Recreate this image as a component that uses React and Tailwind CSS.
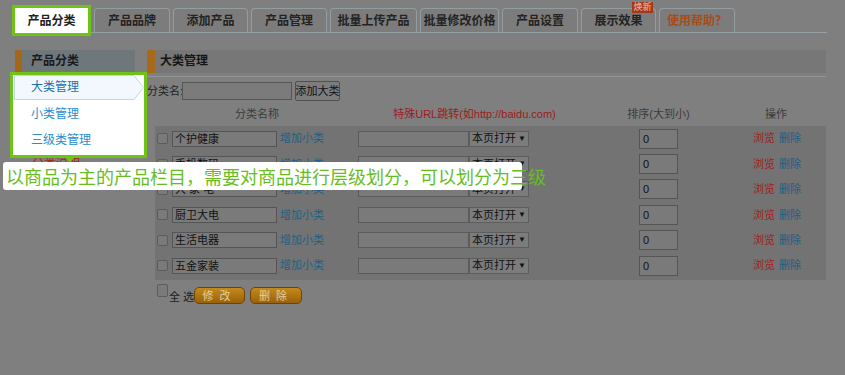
import React from 'react';

const TABS = [
  { label: '产品品牌', w: 'w-[76px]' },
  { label: '添加产品', w: 'w-[75px]' },
  { label: '产品管理', w: 'w-[76px]' },
  { label: '批量上传产品', w: 'w-[87px]' },
  { label: '批量修改价格', w: 'w-[79px]' },
  { label: '产品设置', w: 'w-[76px]' },
  { label: '展示效果', w: 'w-[75px]', badge: '焕新' },
  { label: '使用帮助？', w: 'w-[76px]', help: true },
];

const ROWS = ['个护健康', '手机数码', '大 家 电', '厨卫大电', '生活电器', '五金家装'];

const Checkbox = ({ tall }) => (
  <span className={`block shrink-0 w-[11px] ${tall ? 'h-[13px]' : 'h-[11px]'} rounded-[2px] border border-[#5c5c5c] bg-[#7a7a7a]`} />
);

export default function App() {
  return (
    <div className="relative w-[845px] h-[375px] overflow-hidden bg-[#7f7f7f] text-[#1c1c1c] font-['Liberation_Sans','Noto_Sans_CJK_SC',sans-serif]">
      {/* tabs */}
      <div className="flex items-end gap-[3px] ml-[12px] mr-[18px] pt-[5px] border-b border-[#959fa4]">
        <div className="relative z-10 shrink-0 w-[79px] h-[31px] -mb-[4px] border-[3px] border-[#6fc317] bg-white flex items-center justify-center text-[12px] font-bold text-[#222]">
          产品分类
        </div>
        {TABS.map((t) => (
          <div
            key={t.label}
            className={`relative shrink-0 ${t.w} h-[24px] rounded-t-[4px] border border-b-0 border-[#939ca1] bg-[#7c7c7c] flex items-center justify-center text-[12px] font-bold whitespace-nowrap ${t.help ? 'text-[#a94b17]' : 'text-[#232323]'}`}
          >
            {t.label}
            {t.badge && (
              <span className="absolute left-[50px] -top-[7px] w-[21px] h-[11px] bg-[#a3391b] text-[#e8c8b8] text-[9px] leading-[11px] text-center font-normal">
                {t.badge}
              </span>
            )}
          </div>
        ))}
      </div>

      <div className="flex mt-[17px]">
        {/* sidebar */}
        <div className="shrink-0 ml-[15px] w-[120px]">
          <div className="h-[22px] border-l-[7px] border-[#a4661a] bg-[#6e777a] pl-[9px] text-[12px] font-bold leading-[22px] text-[#1a1a1a]">
            产品分类
          </div>
          <div className="relative z-10 -ml-[5px] w-[137px] h-[86px] border-[3px] border-[#6fc317] bg-white text-[12px]">
            <div className="relative ml-[1px] h-[26px]">
              <svg className="absolute left-0 top-0" width="130" height="25" viewBox="0 0 130 25">
                <polygon points="0.5,0.5 120,0.5 129.5,12.5 120,24.5 0.5,24.5" fill="#f2f8fd" stroke="#bcd8ec" />
              </svg>
              <span className="relative block pl-[17px] leading-[25px] text-[#1d6fae]">大类管理</span>
            </div>
            <div className="h-[26px] pl-[18px] leading-[26px] text-[#2a8dcc]">小类管理</div>
            <div className="h-[26px] pl-[18px] leading-[26px] text-[#2a8dcc]">三级类管理</div>
            <span className="absolute left-[53px] -bottom-[8px] w-0 h-0 border-x-[4px] border-x-transparent border-t-[5px] border-t-[#6fc317]" />
          </div>
          <div className="-mt-[4px] h-[20px] pl-[17px] leading-[20px] text-[12px] text-[#a02a20]">分类说明</div>
        </div>

        {/* main panel */}
        <div className="shrink-0 ml-[12px] w-[679px] text-[11px]">
          <div className="h-[23px] border-l-[8px] border-[#a86a1a] bg-[#777777] pl-[5px] text-[12px] font-bold leading-[23px] text-[#151515]">
            大类管理
          </div>
          <div className="mt-[3px] h-px bg-[#949494]" />

          <div className="mt-[4px] flex items-center h-[20px]">
            <span className="shrink-0 w-[35px] whitespace-nowrap text-[#222]">分类名:</span>
            <span className="shrink-0 w-[110px] h-[18px] border border-[#555] bg-[#7b7b7b]" />
            <span className="shrink-0 ml-[3px] w-[45px] h-[20px] rounded-[2px] border border-[#505050] bg-[#7d7d7d] flex items-center justify-center whitespace-nowrap text-[#111]">
              添加大类
            </span>
          </div>

          <div className="mt-[5px] flex h-[17px] items-center whitespace-nowrap">
            <span className="shrink-0 ml-[50px] w-[120px] text-center text-[#3b3b3b]">分类名称</span>
            <span className="shrink-0 ml-[26px] w-[263px] text-center text-[#9c1b1b]">特殊URL跳转(如http://baidu.com)</span>
            <span className="shrink-0 w-[105px] text-center text-[#3b3b3b]">排序(大到小)</span>
            <span className="shrink-0 ml-[25px] w-[80px] text-center text-[#3b3b3b]">操作</span>
          </div>

          <div className="mt-[3px] ml-[8px] w-[671px] bg-[#737373] pb-[2px]">
            {ROWS.map((name) => (
              <div key={name} className="flex items-center h-[25.4px] whitespace-nowrap">
                <span className="ml-[2px]"><Checkbox /></span>
                <span className="shrink-0 ml-[4px] w-[105px] h-[16px] border border-[#555] bg-[#7a7a7a] pl-[2px] leading-[14px] text-[#111]">
                  {name}
                </span>
                <span className="shrink-0 ml-[3px] w-[78px] text-[#1f5f84]">增加小类</span>
                <span className="shrink-0 w-[111px] h-[16px] border border-[#5a5a5a] bg-[#7a7a7a]" />
                <span className="shrink-0 w-[60px] h-[16px] border border-[#5e5e5e] bg-[#7c7c7c] flex items-center justify-between px-[2px] text-[#111]">
                  本页打开<span className="text-[8px]">▼</span>
                </span>
                <span className="shrink-0 ml-[110px] w-[39px] h-[20px] border border-[#555] bg-[#7a7a7a] pl-[3px] leading-[18px] text-[#111]">0</span>
                <span className="shrink-0 ml-[75px] text-[#a01e1e]">浏览</span>
                <span className="shrink-0 ml-[4px] text-[#1f5f84]">删除</span>
              </div>
            ))}
          </div>

          <div className="mt-[4px] ml-[10px] flex items-start whitespace-nowrap">
            <Checkbox tall />
            <span className="shrink-0 mt-[5px] ml-[1px] w-[25px] text-[#1c1c1c]">全 选</span>
            <span className="shrink-0 mt-[3px] w-[51px] h-[17px] rounded-[5px] border border-[#6d4406] bg-gradient-to-b from-[#c38a1c] to-[#9a6209] flex items-center justify-center text-[#e3cf9f] tracking-[6px]">
              修改
            </span>
            <span className="shrink-0 mt-[3px] ml-[5px] w-[52px] h-[17px] rounded-[5px] border border-[#6d4406] bg-gradient-to-b from-[#c38a1c] to-[#9a6209] flex items-center justify-center text-[#e3cf9f] tracking-[6px]">
              删除
            </span>
          </div>
        </div>
      </div>

      {/* guide tooltip */}
      <div className="absolute z-20 left-[3px] top-[162px] w-[519px] h-[28px] rounded-[3px] bg-white pl-[3px] text-[18px] leading-[28px] text-[#68bd22] whitespace-nowrap font-['Noto_Sans_CJK_SC',sans-serif]">
        以商品为主的产品栏目，需要对商品进行层级划分，可以划分为三级
      </div>
    </div>
  );
}
